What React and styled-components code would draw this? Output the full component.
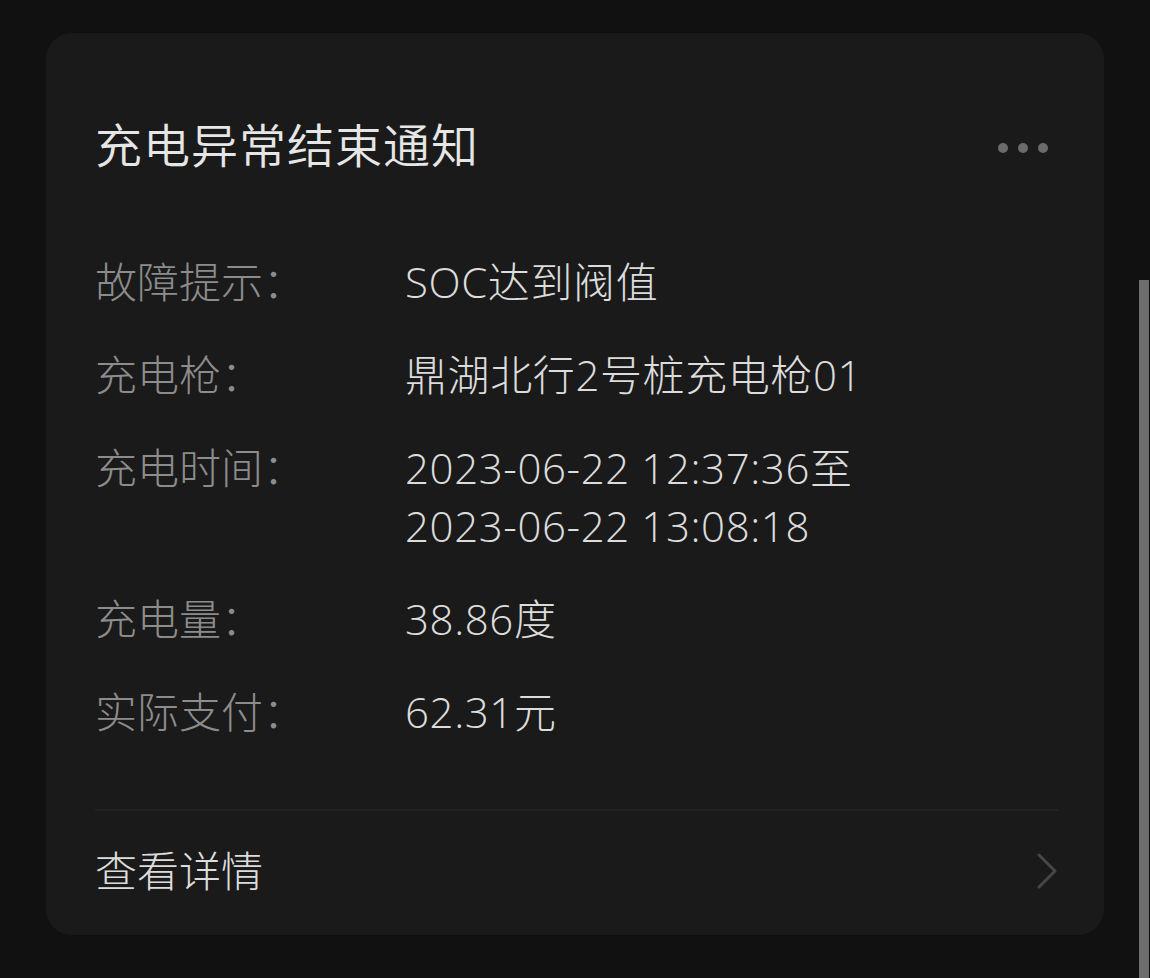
import React from 'react';
import styled, {createGlobalStyle} from 'styled-components';

const Global = createGlobalStyle`
	html, body {
		margin: 0;
		padding: 0;
		background: #111111;
	}
	body {
		font-family: "Open Sans", "Noto Sans CJK SC", sans-serif;
		font-weight: 300;
		overflow: hidden;
	}
`;

const Page = styled.div`
	width: 1150px;
	height: 978px;
	display: flex;
	padding-top: 33px;
	box-sizing: border-box;
`;

const Card = styled.div`
	margin-left: 46px;
	width: 1058px;
	height: 902px;
	box-sizing: border-box;
	background: #1a1a1a;
	border-radius: 26px;
	padding: 82px 46px 0 49px;
	display: flex;
	flex-direction: column;
`;

const Header = styled.div`
	display: flex;
	align-items: center;
	justify-content: space-between;
	height: 60px;
`;

const Title = styled.h1`
	margin: 0;
	font-size: 47px;
	font-weight: 350;
	line-height: 60px;
	color: #e6e6e6;
	letter-spacing: 1px;
`;

const Dots = styled.div`
	display: flex;
	gap: 10px;
	margin-right: 10px;
	margin-top: 6px;
`;

const Dot = styled.span`
	width: 10px;
	height: 10px;
	border-radius: 50%;
	background: #6b6b6b;
`;

const List = styled.div`
	display: flex;
	flex-direction: column;
	gap: 35px;
	margin-top: 78px;
`;

const Row = styled.div`
	display: flex;
	font-size: 42px;
	line-height: 58px;
`;

const Label = styled.div`
	width: 310px;
	flex-shrink: 0;
	color: #8c8c8c;
`;

const Value = styled.div`
	color: #dcdcdc;
	letter-spacing: 0.6px;
`;

const Divider = styled.div`
	height: 2px;
	background: #222222;
	margin-top: 68px;
`;

const Footer = styled.div`
	display: flex;
	align-items: center;
	justify-content: space-between;
	margin-top: 31px;
	height: 58px;
`;

const Link = styled.span`
	font-size: 42px;
	line-height: 58px;
	color: #dcdcdc;
`;

const Track = styled.div`
	margin-left: 35px;
	width: 10px;
	padding-top: 247px;
	display: flex;
	flex-direction: column;
`;

const Thumb = styled.div`
	flex: 1;
	background: #6e6e6e;
	margin-bottom: -33px;
`;

const rows = [
	{label: '故障提示：', value: ['SOC达到阀值']},
	{label: '充电枪：', value: ['鼎湖北行2号桩充电枪01']},
	{label: '充电时间：', value: ['2023-06-22 12:37:36至', '2023-06-22 13:08:18']},
	{label: '充电量：', value: ['38.86度']},
	{label: '实际支付：', value: ['62.31元']},
];

function Chevron()
{
	return <svg width="22" height="38" viewBox="0 0 22 38" fill="none">
		<path d="M3 3 L19 19 L3 35" stroke="#474747" strokeWidth="3" strokeLinecap="round" strokeLinejoin="round" />
	</svg>;
}

export default function App()
{
	return <>
		<Global />
		<Page>
			<Card>
				<Header>
					<Title>充电异常结束通知</Title>
					<Dots><Dot /><Dot /><Dot /></Dots>
				</Header>
				<List>
					{rows.map(({label, value}) =>
						<Row key={label}>
							<Label>{label}</Label>
							<Value>{value.map(line => <div key={line}>{line}</div>)}</Value>
						</Row>
					)}
				</List>
				<Divider />
				<Footer>
					<Link>查看详情</Link>
					<Chevron />
				</Footer>
			</Card>
			<Track><Thumb /></Track>
		</Page>
	</>;
}
